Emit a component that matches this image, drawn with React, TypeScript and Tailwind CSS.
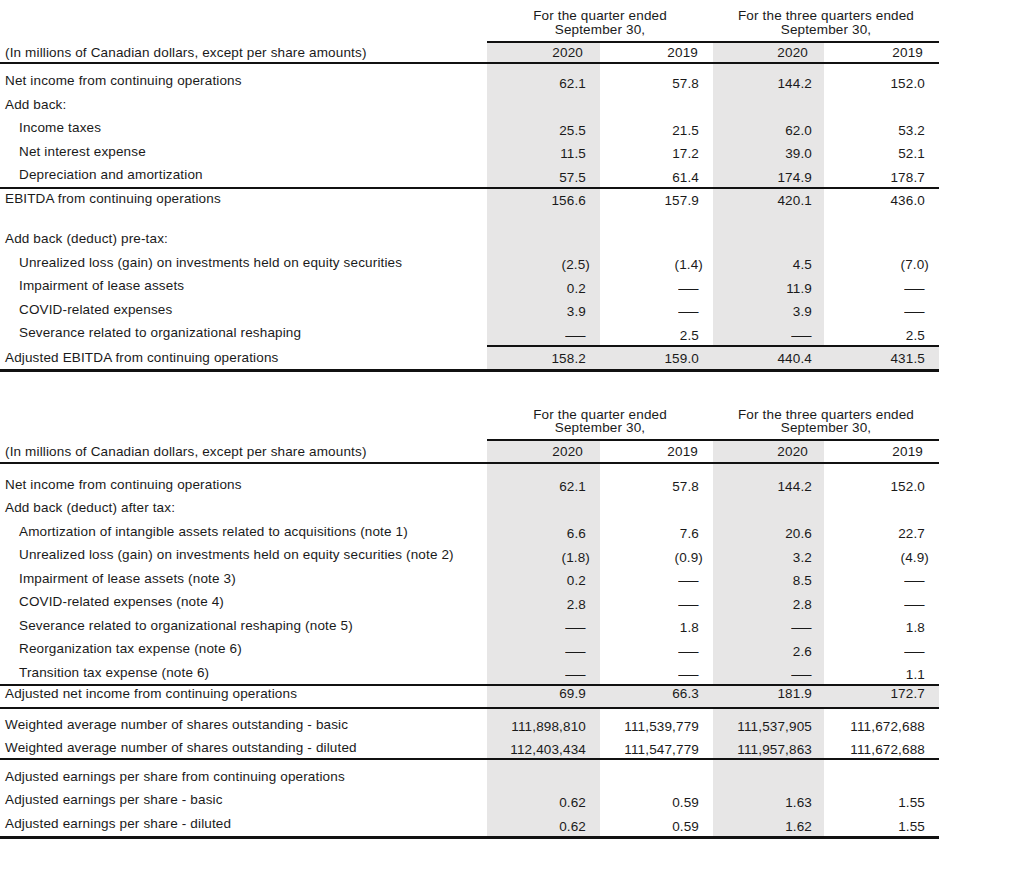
import React from "react";

const G = "grid grid-cols-[487px_113px_113px_111px_115px]";
const GRAY = "bg-[#e7e6e6]";
const PR = ["pr-[14px]", "pr-[14px]", "pr-[12px]", "pr-[14px]"];
const PRN = ["pr-[10px]", "pr-[10px]", "pr-[8px]", "pr-[10px]"];
const PRY = ["pr-[17px]", "pr-[15px]", "pr-[16px]", "pr-[16px]"];

function Dash() {
  return <span className="inline-block origin-right scale-x-[1.5]">—</span>;
}

type RowProps = {
  h: string;
  label?: string;
  indent?: boolean;
  vals?: string[];
  total?: boolean;
  vp?: string;
  lp?: string;
  years?: boolean;
};

function Row({ h, label, indent, vals, total, vp = "pt-[5px]", lp = "", years }: RowProps) {
  return (
    <div className={`${G} ${h}`}>
      <div className={`flex items-center whitespace-nowrap ${indent ? "pl-[19px]" : "pl-[5px]"} ${lp}`}>
        {label}
      </div>
      {[0, 1, 2, 3].map((i) => {
        const v = vals?.[i];
        const neg = v?.startsWith("(");
        const bg = total || i % 2 === 0 ? GRAY : "";
        const pr = years ? PRY[i] : neg ? PRN[i] : PR[i];
        return (
          <div key={i} className={`flex items-center justify-end whitespace-nowrap ${years ? "" : vp} ${bg} ${pr}`}>
            {v === "—" ? <Dash /> : v}
          </div>
        );
      })}
    </div>
  );
}

function Header({ h, lead, pb }: { h: string; lead: string; pb: string }) {
  return (
    <div className={`${G} ${h}`}>
      <div />
      <div className={`col-span-2 flex flex-col items-center justify-end ${lead} ${pb}`}>
        <span>For the quarter ended</span>
        <span>September 30,</span>
      </div>
      <div className={`col-span-2 flex flex-col items-center justify-end ${lead} ${pb}`}>
        <span>For the three quarters ended</span>
        <span>September 30,</span>
      </div>
    </div>
  );
}

function ColLine() {
  return (
    <div className={G}>
      <div />
      <div className="col-span-4 h-[2px] bg-[#111]" />
    </div>
  );
}

function FullLine({ thick }: { thick?: boolean }) {
  return <div className={`w-[939px] bg-[#111] ${thick ? "h-[3px]" : "h-[2px]"}`} />;
}

const UNITS = "(In millions of Canadian dollars, except per share amounts)";
const YEARS = ["2020", "2019", "2020", "2019"];

export default function App() {
  return (
    <div className="min-h-[869px] w-[1027px] bg-white font-['Liberation_Sans',Arial,sans-serif] text-[13.5px] leading-[16px] tracking-[0.15px] text-[#1a1a1a]">
      {/* Table 1 */}
      <Header h="h-[41px]" lead="leading-[14px]" pb="pb-[4.5px]" />
      <ColLine />
      <Row h="h-[19px]" label={UNITS} vals={YEARS} years />
      <FullLine />
      <Row h="h-[5.5px]" />
      <Row h="h-[23.5px]" label="Net income from continuing operations" vals={["62.1", "57.8", "144.2", "152.0"]} />
      <Row h="h-[23.5px]" label="Add back:" />
      <Row h="h-[23.5px]" indent label="Income taxes" vals={["25.5", "21.5", "62.0", "53.2"]} />
      <Row h="h-[23.5px]" indent label="Net interest expense" vals={["11.5", "17.2", "39.0", "52.1"]} />
      <Row h="h-[23.5px]" indent label="Depreciation and amortization" vals={["57.5", "61.4", "174.9", "178.7"]} />
      <FullLine />
      <Row h="h-[20.5px]" label="EBITDA from continuing operations" vals={["156.6", "157.9", "420.1", "436.0"]} vp="pt-[4px]" />
      <Row h="h-[17.75px]" />
      <Row h="h-[23.5px]" label="Add back (deduct) pre-tax:" />
      <Row h="h-[23.5px]" indent label="Unrealized loss (gain) on investments held on equity securities" vals={["(2.5)", "(1.4)", "4.5", "(7.0)"]} />
      <Row h="h-[23.5px]" indent label="Impairment of lease assets" vals={["0.2", "—", "11.9", "—"]} />
      <Row h="h-[23.5px]" indent label="COVID-related expenses" vals={["3.9", "—", "3.9", "—"]} />
      <Row h="h-[23.5px]" indent label="Severance related to organizational reshaping" vals={["—", "2.5", "—", "2.5"]} />
      <ColLine />
      <Row h="h-[22px]" label="Adjusted EBITDA from continuing operations" vals={["158.2", "159.0", "440.4", "431.5"]} total vp="pt-[2px]" />
      <FullLine thick />

      {/* Table 2 */}
      <Header h="h-[67.5px]" lead="leading-[13px]" pb="pb-[5px]" />
      <ColLine />
      <Row h="h-[21px]" label={UNITS} vals={YEARS} years />
      <FullLine />
      <Row h="h-[8.5px]" />
      <Row h="h-[23.5px]" label="Net income from continuing operations" vals={["62.1", "57.8", "144.2", "152.0"]} />
      <Row h="h-[23.5px]" label="Add back (deduct) after tax:" />
      <Row h="h-[23.5px]" indent label="Amortization of intangible assets related to acquisitions (note 1)" vals={["6.6", "7.6", "20.6", "22.7"]} />
      <Row h="h-[23.5px]" indent label="Unrealized loss (gain) on investments held on equity securities (note 2)" vals={["(1.8)", "(0.9)", "3.2", "(4.9)"]} />
      <Row h="h-[23.5px]" indent label="Impairment of lease assets (note 3)" vals={["0.2", "—", "8.5", "—"]} />
      <Row h="h-[23.5px]" indent label="COVID-related expenses (note 4)" vals={["2.8", "—", "2.8", "—"]} />
      <Row h="h-[23.5px]" indent label="Severance related to organizational reshaping (note 5)" vals={["—", "1.8", "—", "1.8"]} />
      <Row h="h-[23.5px]" indent label="Reorganization tax expense (note 6)" vals={["—", "—", "2.6", "—"]} />
      <Row h="h-[23.5px]" indent label="Transition tax expense (note 6)" vals={["—", "—", "—", "1.1"]} />
      <FullLine />
      <Row h="h-[21px]" label="Adjusted net income from continuing operations" vals={["69.9", "66.3", "181.9", "172.7"]} total lp="pb-[5px]" vp="pb-[5px]" />
      <FullLine />
      <Row h="h-[4px]" />
      <Row h="h-[23.5px]" label="Weighted average number of shares outstanding - basic" vals={["111,898,810", "111,539,779", "111,537,905", "111,672,688"]} vp="pt-[4px]" />
      <Row h="h-[21.5px]" label="Weighted average number of shares outstanding - diluted" vals={["112,403,434", "111,547,779", "111,957,863", "111,672,688"]} vp="pt-[4px]" />
      <FullLine />
      <Row h="h-[4.5px]" />
      <Row h="h-[23.5px]" label="Adjusted earnings per share from continuing operations" />
      <Row h="h-[23.5px]" label="Adjusted earnings per share - basic" vals={["0.62", "0.59", "1.63", "1.55"]} />
      <Row h="h-[24.5px]" label="Adjusted earnings per share - diluted" vals={["0.62", "0.59", "1.62", "1.55"]} lp="pb-[1px]" />
      <FullLine thick />
    </div>
  );
}
